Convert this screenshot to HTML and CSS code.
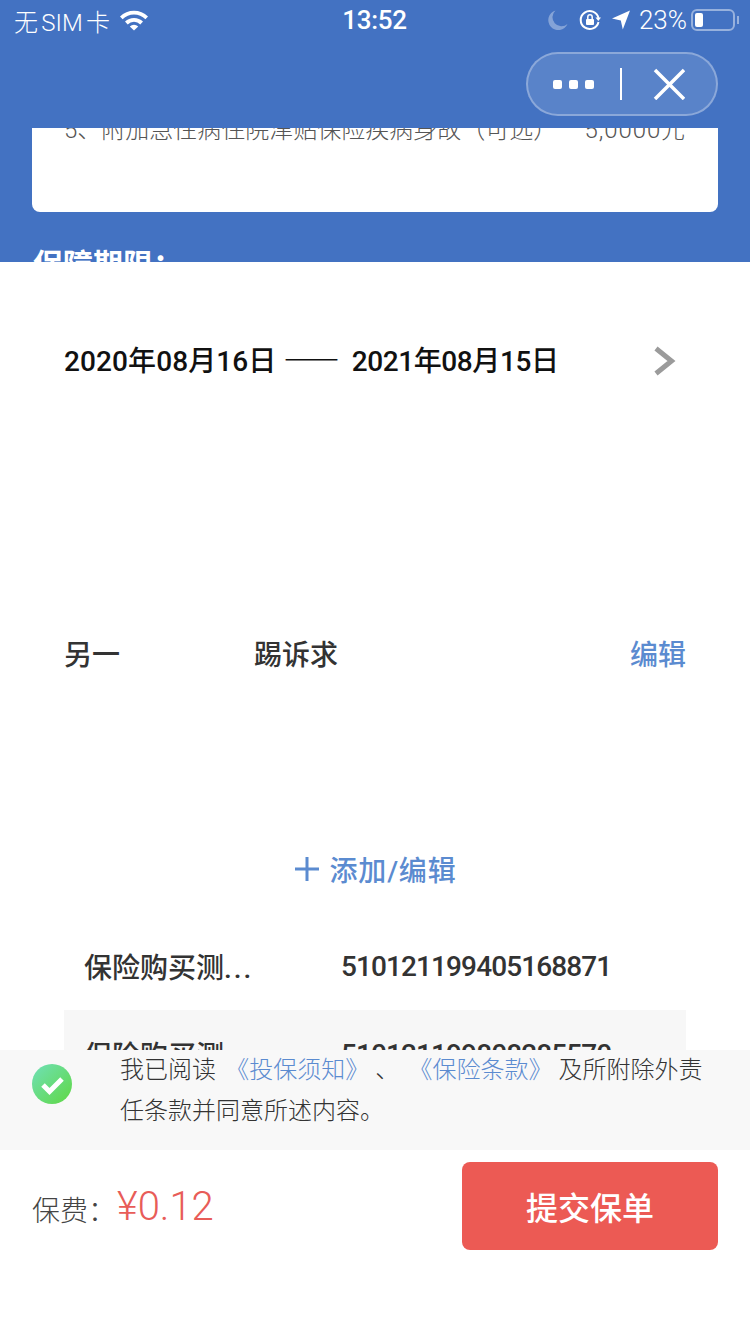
FILE: index.html
```html
<!DOCTYPE html>
<html lang="zh-CN">
<head>
  <meta charset="UTF-8">
  <title>提交保单</title>
  <link rel="stylesheet" href="styles.css">
</head>
<body>
  <div class="page">
    <div class="top-bar">
      <div class="status-bar">
        <div class="status-left">
          <span class="carrier">无 SIM 卡</span>
          <svg class="wifi" width="30" height="22" viewBox="0 0 30 22">
            <path d="M1 7.500a20 20 0 0 1 28 0l-2.600 2.800a16.200 16.200 0 0 0-22.800 0z" fill="#fff"/>
            <path d="M6 12.600a13 13 0 0 1 18 0l-2.700 2.800a9 9 0 0 0-12.600 0z" fill="#fff"/>
            <path d="M10.800 17.400a6 6 0 0 1 8.400 0L15 21.600z" fill="#fff"/>
          </svg>
        </div>
        <div class="status-time">13:52</div>
        <div class="status-right">
          <svg class="moon" width="20" height="20" viewBox="0 0 20 20">
            <path d="M7.500 0.500a10 10 0 1 0 12 13.500a9 9 0 0 1-12-13.500z" fill="#fff" fill-opacity="0.35"/>
          </svg>
          <svg class="lock" width="22" height="22" viewBox="0 0 22 22">
            <path d="M19.500 13a9 9 0 1 1 0-4" fill="none" stroke="#fff" stroke-width="2"/>
            <path d="M16.500 8.500h5.500l-2.700 3.500z" fill="#fff"/>
            <rect x="7" y="10" width="8" height="6" rx="1" fill="#fff"/>
            <path d="M8.800 10V8a2.200 2.200 0 0 1 4.400 0v2" fill="none" stroke="#fff" stroke-width="1.500"/>
          </svg>
          <svg class="arrow" width="18" height="20" viewBox="0 0 18 20">
            <path d="M18 0.500L10.800 19.500L8.800 10.500L0 8.600z" fill="#fff"/>
          </svg>
          <span class="battery-text">23%</span>
          <div class="battery"><div class="battery-fill"></div></div>
          <div class="battery-nub"></div>
        </div>
      </div>
      <div class="capsule">
        <div class="capsule-dots"><i></i><i></i><i></i></div>
        <div class="capsule-line"></div>
        <svg width="32" height="32" viewBox="0 0 32 32">
          <path d="M2 2L31 31M31 2L2 31" stroke="#fff" stroke-width="3.500" fill="none"/>
        </svg>
      </div>
    </div>

    <div class="blue-section">
      <div class="plan-card">
        <div class="plan-row">
          <span>5、附加急性病住院津贴保险疾病身故（可选）</span>
          <span class="plan-value">5,0000元</span>
        </div>
      </div>
      <div class="period-title">保障期限：</div>
    </div>

    <div class="content">
      <div class="date-row">
        <span>2020年08月16日 <span class="date-dash">——</span> <span class="date-end">2021年08月15日</span></span>
        <svg class="date-arrow" width="24" height="32" viewBox="0 0 24 32">
          <path d="M4 3.500L19.500 16L4 28.500" fill="none" stroke="#9b9b9b" stroke-width="5"/>
        </svg>
      </div>
      <div class="person-row">
        <span class="person-name">另一</span>
        <span class="person-claim">踢诉求</span>
        <span class="edit-link">编辑</span>
      </div>
      <div class="add-row">
        <svg width="26" height="26" viewBox="0 0 26 26">
          <path d="M13 1V25M1 13H25" stroke="#5b8bd0" stroke-width="3" fill="none"/>
        </svg>
        <span class="add-label">添加/编辑</span>
      </div>
      <div class="insured-list">
        <div class="insured-row">
          <span class="insured-name">保险购买测<span class="dots">...</span></span>
          <span class="insured-id">510121199405168871</span>
        </div>
        <div class="insured-row shaded">
          <span class="insured-name">保险购买测</span>
          <span class="insured-id">510121199808285570</span>
        </div>
      </div>
    </div>

    <div class="agreement">
      <svg class="check" width="40" height="40" viewBox="0 0 40 40">
        <defs>
          <linearGradient id="checkFill" x1="0" y1="0" x2="1" y2="1">
            <stop offset="0" stop-color="#70e0b8"/>
            <stop offset="1" stop-color="#5fd843"/>
          </linearGradient>
        </defs>
        <circle cx="20" cy="20" r="20" fill="url(#checkFill)"/>
        <path d="M11 21L17.500 27.500L30 15" fill="none" stroke="#fff" stroke-width="5"/>
      </svg>
      <p class="agreement-text">我已阅读 <a>《投保须知》</a> 、 <a>《保险条款》</a> 及所附除外责任条款并同意所述内容。</p>
    </div>

    <div class="footer">
      <div class="price">
        <span class="price-label">保费：</span>
        <span class="price-value">¥0.12</span>
      </div>
      <button class="submit">提交保单</button>
    </div>
  </div>
</body>
</html>
```

FILE: styles.css
```css
* { box-sizing: border-box; }
body { margin: 0; background-color: #fff; font-family: "Roboto", "Noto Sans CJK SC", sans-serif; color: #333; }
.page { width: 750px; height: 1334px; overflow: hidden; background-color: #fff; }

.top-bar { height: 128px; background-color: #4372c2; }
.status-bar { height: 40px; display: grid; grid-template-columns: 1fr auto 1fr; align-items: center; padding: 0 11px 0 14px; color: #fff; font-size: 26px; }
.status-left { display: flex; align-items: center; gap: 9px; font-weight: 300; }
.carrier { font-size: 24px; word-spacing: -2.500px; }
.wifi { margin-top: -1px; }
.status-time { margin-right: 4px; font-weight: 500; letter-spacing: -0.3px; }
.status-right { display: flex; align-items: center; justify-content: flex-end; font-weight: 300; }
.moon { margin-right: 11px; }
.lock { margin-right: 11px; }
.arrow { margin-right: 9px; }
.battery-text { margin-right: 4px; }
.battery { width: 44px; height: 22px; padding: 2px; border: 2px solid rgba(255, 255, 255, 0.45); border-radius: 6px; }
.battery-fill { width: 8px; height: 100%; background-color: #fff; border-radius: 2px; }
.battery-nub { width: 2px; height: 8px; margin-left: 2px; background-color: rgba(255, 255, 255, 0.45); }

.capsule { width: 192px; height: 64px; margin: 12px 32px 0 auto; padding-left: 25px; display: flex; align-items: center; border: 2px solid rgba(255, 255, 255, 0.3); border-radius: 32px; background-color: rgba(255, 255, 255, 0.12); }
.capsule-dots { display: flex; gap: 7px; width: 41px; }
.capsule-dots i { width: 9px; height: 9px; background-color: #fff; border-radius: 2px; }
.capsule-line { width: 2px; height: 32px; margin: 0 31px 0 26px; background-color: #fff; }

.blue-section { height: 134px; padding: 0 32px; overflow: hidden; background-color: #4372c2; }
.plan-card { height: 84px; padding: 0 32px; overflow: hidden; background-color: #fff; border-radius: 0 0 8px 8px; }
.plan-row { display: flex; justify-content: space-between; margin-top: -18px; line-height: 40px; font-size: 24px; font-weight: 300; color: #555; }
.plan-value { letter-spacing: 0.9px; }
.period-title { margin-top: 33px; padding-left: 1px; line-height: 40px; font-size: 30px; font-weight: 700; color: #fff; }

.content { height: 788px; overflow: hidden; padding: 0 64px; }
.date-row { height: 40px; margin-top: 77px; display: flex; justify-content: space-between; align-items: center; padding-right: 10px; font-size: 28px; font-weight: 500; color: #111; letter-spacing: 0.1px; }
.date-dash { margin-right: 5px; font-family: "Noto Sans CJK SC", sans-serif; font-weight: 900; }
.date-end { letter-spacing: -0.4px; }
.date-arrow { margin-top: 4px; }
.person-row { height: 40px; margin-top: 254px; display: flex; align-items: center; font-size: 28px; font-weight: 500; }
.person-name { width: 190px; }
.person-claim { flex: 1; }
.edit-link { color: #5b8bd0; }
.add-row { height: 40px; margin-top: 176px; display: flex; justify-content: center; align-items: center; gap: 10px; font-size: 28px; font-weight: 500; color: #5b8bd0; }
.add-label { letter-spacing: 0.8px; }
.insured-list { margin-top: 33px; }
.insured-row { height: 88px; padding: 0 20px; display: flex; align-items: center; font-size: 28px; font-weight: 500; }
.insured-row.shaded { background-color: #f7f7f7; }
.insured-name { width: 257px; }
.dots { letter-spacing: 2px; }
.insured-id { letter-spacing: -0.9px; }

.agreement { height: 100px; padding: 0 32px; display: flex; align-items: flex-start; background-color: #f8f8f8; }
.check { flex: none; margin: 14px 48px 0 0; }
.agreement-text { margin: 0; line-height: 41px; font-size: 24px; font-weight: 300; color: #333; }
.agreement-text a { margin-left: 3.5px; color: #5b8bd0; }

.footer { height: 100px; padding: 12px 32px 0; display: flex; justify-content: space-between; align-items: flex-start; }
.price { height: 88px; display: flex; align-items: center; }
.price-label { width: 85px; margin-top: 6px; font-size: 28px; font-weight: 300; color: #444; }
.price-value { font-size: 40px; font-weight: 300; color: #e85c58; }
.submit { width: 256px; height: 88px; border: 0; border-radius: 8px; background-color: #ec5a54; color: #fff; font-family: inherit; font-size: 32px; font-weight: 500; }
```
